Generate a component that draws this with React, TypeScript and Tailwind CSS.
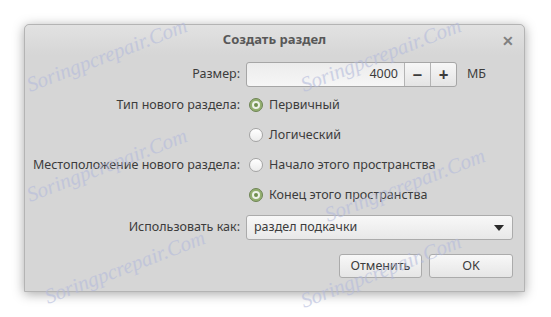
import React from 'react';

const font = { fontFamily: '"Noto Sans", "Open Sans", sans-serif' };

const Radio: React.FC<{ checked?: boolean; label: string }> = ({ checked, label }) => (
  <label className="flex h-[30px] items-center gap-[6px] whitespace-nowrap pl-[3px] text-[12.5px] text-[#3c3c3c]">
    {checked ? (
      <span className="flex h-[14px] w-[14px] items-center justify-center rounded-full border border-[#6f8456] bg-[#94b070]">
        <span className="flex h-[8px] w-[8px] items-center justify-center rounded-full bg-[#eef2e8]">
          <span className="h-[4px] w-[4px] rounded-full bg-[#6f8f4c]" />
        </span>
      </span>
    ) : (
      <span className="h-[14px] w-[14px] rounded-full border border-[#a4a4a4] bg-gradient-to-b from-white to-[#ececec]" />
    )}
    {label}
  </label>
);

const Watermark: React.FC<{ className: string }> = ({ className }) => (
  <span
    className={`pointer-events-none absolute whitespace-nowrap text-[21px] italic text-[#b4bbdc] opacity-60 ${className}`}
    style={{ fontFamily: '"Liberation Serif", serif', transform: 'rotate(-21deg)' }}
  >
    Soringpcrepair.Com
  </span>
);

const App: React.FC = () => {
  return (
    <div className="relative h-[317px] w-[551px] overflow-hidden bg-white pl-[24px] pt-[24px]" style={font}>
      <div className="flex h-[268px] w-[501px] flex-col rounded-t-[5px] border border-[#b4b4b4] bg-[#d6d6d6] shadow-[0_2px_12px_rgba(0,0,0,0.35)]">
        {/* title bar */}
        <div className="relative flex h-[30px] items-center justify-center rounded-t-[5px] bg-gradient-to-b from-[#e2e2e2] to-[#d6d6d6]">
          <span className="text-[13px] font-bold text-[#585858]">Создать раздел</span>
          <span className="absolute right-[10px] top-[5px] text-[14px] font-bold text-[#808080]">✕</span>
        </div>

        <div className="grid grid-cols-[204px_1fr] gap-x-[6px] pl-[11px] pr-[11px] pt-[7px] text-[12.5px] text-[#3c3c3c]">
          {/* size */}
          <div className="flex h-[25px] items-center justify-end whitespace-nowrap">Размер:</div>
          <div className="flex h-[25px] items-center">
            <div className="flex h-[25px] w-[211px] rounded-[3px] border border-[#a6a6a6]">
              <div className="flex flex-1 items-center justify-end rounded-l-[3px] bg-gradient-to-b from-[#ececec] to-[#f6f6f6] pr-[6px]">4000</div>
              <div className="flex w-[26px] items-center justify-center border-l border-[#b4b4b4] bg-gradient-to-b from-[#f7f7f7] to-[#e4e4e4] text-[17px] font-bold">−</div>
              <div className="flex w-[26px] items-center justify-center rounded-r-[3px] border-l border-[#b4b4b4] bg-gradient-to-b from-[#f7f7f7] to-[#e4e4e4] text-[17px] font-bold">+</div>
            </div>
            <span className="ml-[10px]">МБ</span>
          </div>

          {/* type */}
          <div className="mt-[3px] flex h-[30px] items-center justify-end whitespace-nowrap">Тип нового раздела:</div>
          <div className="mt-[3px]">
            <Radio checked label="Первичный" />
            <Radio label="Логический" />
          </div>

          {/* location */}
          <div className="flex h-[30px] items-center justify-end whitespace-nowrap">Местоположение нового раздела:</div>
          <div>
            <Radio label="Начало этого пространства" />
            <Radio checked label="Конец этого пространства" />
          </div>

          {/* use as */}
          <div className="mt-[5px] flex h-[25px] items-center justify-end whitespace-nowrap">Использовать как:</div>
          <div className="mt-[5px] flex h-[25px] items-center justify-between rounded-[3px] border border-[#ababab] bg-gradient-to-b from-[#f8f8f8] to-[#e8e8e8] pl-[7px] pr-[8px]">
            <span>раздел подкачки</span>
            <svg width="10" height="6" viewBox="0 0 10 6">
              <path d="M0 0 H10 L5 6 Z" fill="#2a2a2a" />
            </svg>
          </div>
        </div>

        {/* buttons */}
        <div className="mt-[14px] flex justify-end gap-[7px] pr-[11px] text-[12.5px] text-[#3c3c3c]">
          <button className="h-[24px] w-[83px] rounded-[3px] border border-[#ababab] bg-gradient-to-b from-[#f8f8f8] to-[#e6e6e6]">Отменить</button>
          <button className="h-[24px] w-[84px] rounded-[3px] border border-[#ababab] bg-gradient-to-b from-[#f8f8f8] to-[#e6e6e6]">OK</button>
        </div>
      </div>

      <Watermark className="left-[22px] top-[40px]" />
      <Watermark className="left-[296px] top-[40px]" />
      <Watermark className="left-[22px] top-[150px]" />
      <Watermark className="left-[320px] top-[170px]" />
      <Watermark className="left-[40px] top-[252px]" />
      <Watermark className="left-[296px] top-[256px]" />
    </div>
  );
};

export default App;
